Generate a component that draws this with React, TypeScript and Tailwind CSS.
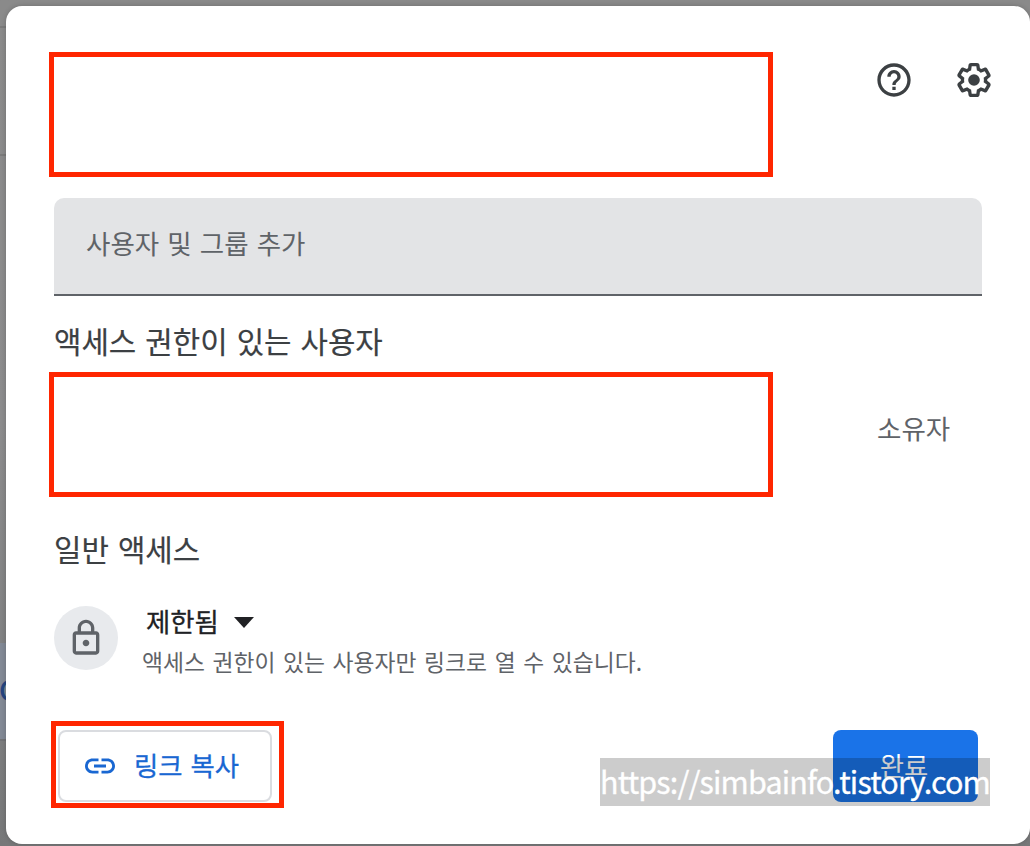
// src/App.tsx
type IconProps = { className?: string };

function HelpIcon({ className }: IconProps) {
  return (
    <svg viewBox="0 0 24 24" fill="currentColor" className={className}>
      <path d="M11 18h2v-2h-2v2zm1-16C6.48 2 2 6.48 2 12s4.48 10 10 10 10-4.48 10-10S17.52 2 12 2zm0 18c-4.41 0-8-3.59-8-8s3.59-8 8-8 8 3.59 8 8-3.59 8-8 8zm0-14c-2.21 0-4 1.79-4 4h2c0-1.1.9-2 2-2s2 .9 2 2c0 2-3 1.75-3 5h2c0-2.25 3-2.5 3-5 0-2.21-1.79-4-4-4z" />
    </svg>
  );
}

function SettingsIcon({ className }: IconProps) {
  return (
    <svg viewBox="0 0 24 24" fill="currentColor" className={className}>
      <path d="M13.85 22.25h-3.7c-.74 0-1.36-.54-1.45-1.27l-.27-1.89c-.27-.14-.53-.29-.79-.46l-1.8.72c-.7.26-1.47-.03-1.81-.65L2.2 15.53c-.35-.66-.2-1.44.36-1.88l1.53-1.19c-.01-.15-.02-.3-.02-.46 0-.15.01-.31.02-.46l-1.52-1.19c-.59-.45-.74-1.26-.37-1.88l1.85-3.19c.34-.62 1.11-.9 1.79-.63l1.81.73c.26-.17.52-.32.78-.46l.27-1.91c.09-.7.71-1.25 1.44-1.25h3.7c.74 0 1.36.54 1.45 1.27l.27 1.89c.27.14.53.29.79.46l1.8-.72c.71-.26 1.48.03 1.82.65l1.84 3.18c.36.66.2 1.44-.36 1.88l-1.52 1.19c.01.15.02.3.02.46s-.01.31-.02.46l1.52 1.19c.56.45.72 1.23.37 1.86l-1.86 3.22c-.34.62-1.11.9-1.8.63l-1.8-.72c-.26.17-.52.32-.78.46l-.27 1.91c-.1.68-.72 1.22-1.46 1.22zm-3.23-2h2.76l.37-2.55.53-.22c.44-.18.88-.44 1.34-.78l.45-.34 2.38.96 1.38-2.4-2.03-1.58.07-.56c.03-.26.06-.51.06-.78s-.03-.53-.06-.78l-.07-.56 2.03-1.58-1.39-2.4-2.39.96-.45-.35c-.42-.32-.87-.58-1.33-.77l-.52-.22-.37-2.55h-2.76l-.37 2.55-.53.21c-.44.19-.88.44-1.34.79l-.45.33-2.38-.95-1.39 2.39 2.03 1.58-.07.56a7 7 0 0 0-.06.79c0 .26.02.53.06.78l.07.56-2.03 1.58 1.38 2.4 2.39-.96.45.35c.43.33.86.58 1.33.77l.53.22.38 2.55z" />
      <circle cx="12" cy="12" r="3.5" />
    </svg>
  );
}

function LockIcon({ className }: IconProps) {
  return (
    <svg viewBox="0 0 24 24" fill="currentColor" className={className}>
      <path d="M18 8h-1V6c0-2.76-2.24-5-5-5S7 3.24 7 6v2H6c-1.1 0-2 .9-2 2v10c0 1.1.9 2 2 2h12c1.1 0 2-.9 2-2V10c0-1.1-.9-2-2-2zM9 6c0-1.66 1.34-3 3-3s3 1.34 3 3v2H9V6zm9 14H6V10h12v10zm-6-3c1.1 0 2-.9 2-2s-.9-2-2-2-2 .9-2 2 .9 2 2 2z" />
    </svg>
  );
}

function LinkIcon({ className }: IconProps) {
  return (
    <svg viewBox="0 0 24 24" fill="currentColor" className={className}>
      <path d="M3.9 12c0-1.71 1.39-3.1 3.1-3.1h4V7H7c-2.76 0-5 2.24-5 5s2.24 5 5 5h4v-1.9H7c-1.71 0-3.1-1.39-3.1-3.1zM8 13h8v-2H8v2zm9-6h-4v1.9h4c1.71 0 3.1 1.39 3.1 3.1s-1.39 3.1-3.1 3.1h-4V17h4c2.76 0 5-2.24 5-5s-2.24-5-5-5z" />
    </svg>
  );
}

// Slice of the dimmed page that stays visible left of the dialog
function PageBehind() {
  return (
    <div className="absolute inset-0 flex flex-col overflow-hidden bg-gradient-to-b from-[#8a8a8a] via-[#8c8c8d] to-[#777879]">
      <div className="h-[28px] shrink-0 border-b-2 border-[#7b7b7b]" />
      <div className="h-[128px] shrink-0 border-b-2 border-[#7b7b7b]" />
      <div className="h-[487px] shrink-0" />
      <div className="h-[98px] shrink-0 border-b-2 border-[#727376] bg-[#828995] pt-[31px]">
        <span className="-ml-px block text-[28px] leading-[30px] font-medium text-[#26457f]">C</span>
      </div>
    </div>
  );
}

export default function App() {
  return (
    <div className="relative h-[846px] w-[1030px] overflow-hidden pl-[6px] pt-[6px] font-['Noto_Sans_CJK_KR',sans-serif]">
      <PageBehind />

      <div className="relative flex h-[838px] flex-col rounded-2xl bg-white pl-[43px] pt-[46px] shadow-[0_0_5px_rgba(0,0,0,0.2)]">
        {/* Header */}
        <div className="flex h-[125px]">
          <div className="w-[724px] border-5 border-[#ff2600]" />
          <div className="ml-[101px] mt-2 flex gap-10 text-[#3c4043]">
            <HelpIcon className="size-10" />
            <SettingsIcon className="size-10" />
          </div>
        </div>

        {/* Add people */}
        <div className="ml-[5px] mt-[21px] flex h-[98px] w-[928px] items-center rounded-t-[10px] border-b-2 border-[#5f6368] bg-[#e3e4e6] pb-[6px] pl-8 text-[26.5px] [word-spacing:2.2px] text-[#5f6368]">
          사용자 및 그룹 추가
        </div>

        <h2 className="ml-[5px] mt-[24px] h-[40px] text-[29.8px] leading-[40px] [word-spacing:2.4px] text-[#3c4043] [-webkit-text-stroke:0.2px]">
          액세스 권한이 있는 사용자
        </h2>

        <div className="mt-[12px] flex h-[125px] items-center">
          <div className="h-full w-[724px] border-5 border-[#ff2600]" />
          <span className="ml-[104px] pb-[13px] text-[26.5px] text-[#5f6368]">소유자</span>
        </div>

        <h2 className="ml-[5px] mt-[31px] h-[40px] text-[29.8px] leading-[40px] [word-spacing:2.4px] text-[#3c4043] [-webkit-text-stroke:0.2px]">
          일반 액세스
        </h2>

        {/* General access */}
        <div className="ml-[5px] mt-[38px] flex h-[80px]">
          <div className="flex size-16 items-center justify-center rounded-full bg-[#e8eaed] text-[#5f6368]">
            <LockIcon className="size-10" />
          </div>
          <div className="ml-6">
            <div className="flex h-8 items-center pl-1 text-[#202124]">
              <span className="pb-[3px] text-[26.4px] [-webkit-text-stroke:0.3px]">제한됨</span>
              <svg viewBox="0 0 20 11" fill="currentColor" className="ml-[15px] h-[11px] w-5">
                <path d="M0 0h20L10 11z" />
              </svg>
            </div>
            <p className="mt-[8px] h-8 whitespace-nowrap text-[22.8px] leading-8 [word-spacing:2.5px] text-[#5f6368]">
              액세스 권한이 있는 사용자만 링크로 열 수 있습니다.
            </p>
          </div>
        </div>

        {/* Footer */}
        <div className="ml-[2px] mt-[35px] flex h-[87px]">
          <div className="w-[233px] border-5 border-[#ff2600] pl-[2px] pt-1">
            <button className="flex h-[72px] w-[214px] items-center rounded-lg border-2 border-[#dadce0] pl-[22px] text-[26.4px] text-[#1967d2]">
              <LinkIcon className="size-9" />
              <span className="ml-[16px] pb-[3px] [word-spacing:2px] [-webkit-text-stroke:0.3px]">링크 복사</span>
            </button>
          </div>
          <button className="ml-[549px] mt-[9px] h-[72px] w-[145px] rounded-lg bg-[#1a73e8] pb-[3px] pr-[3px] text-[26.4px] text-white">
            완료
          </button>
        </div>
      </div>

      {/* Watermark */}
      <div className="absolute left-[600px] top-[758px] h-[48px] w-[390px] whitespace-nowrap bg-black/20 text-[30.5px] leading-[47px] tracking-[-0.85px] text-white [-webkit-text-stroke:0.3px]">
        https://simbainfo.tistory.com
      </div>
    </div>
  );
}
